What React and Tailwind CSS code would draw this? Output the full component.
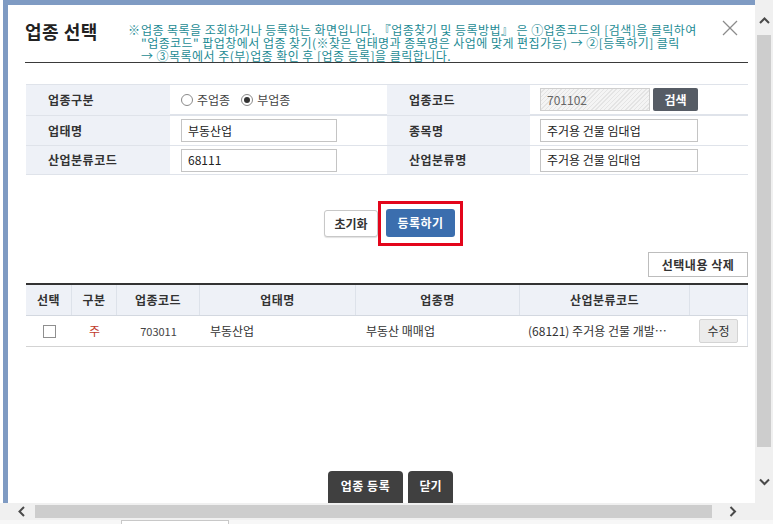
import React from "react";

function Chevron({ dir, className }) {
  const pts = {
    up: "1,6 5.5,1.5 10,6",
    down: "1,1.5 5.5,6 10,1.5",
    left: "6,1 1.5,5.5 6,10",
    right: "1.5,1 6,5.5 1.5,10",
  }[dir];
  const vb = dir === "up" || dir === "down" ? "0 0 11 8" : "0 0 8 11";
  const w = dir === "up" || dir === "down" ? 11 : 8;
  const h = dir === "up" || dir === "down" ? 8 : 11;
  return (
    <svg width={w} height={h} viewBox={vb} className={className}>
      <polyline points={pts} fill="none" stroke="#4a4a4a" strokeWidth="2" />
    </svg>
  );
}

function Radio({ checked }) {
  return (
    <span className="w-[12px] h-[12px] rounded-full border border-[#8a8a8a] bg-white flex items-center justify-center">
      {checked && <span className="w-[6px] h-[6px] rounded-full bg-[#333]" />}
    </span>
  );
}

function Label({ children }) {
  return (
    <div className="bg-[#eef1f7] flex items-center pl-[22px] font-bold text-[12px] text-[#333] tracking-[0.5px]">
      {children}
    </div>
  );
}

function Input({ value, w }) {
  return (
    <div
      className={`h-[23px] border border-[#c4c4c4] bg-white flex items-center pl-[6px] text-[12px] text-[#222] ${w}`}
    >
      {value}
    </div>
  );
}

export default function App() {
  return (
    <div className="w-[773px] h-[524px] overflow-hidden bg-white flex flex-col font-['Noto_Sans_CJK_KR','Liberation_Sans',sans-serif] text-[#333]">
      <div className="flex h-[503px]">
        <div className="w-[3px] bg-white" />
        <div className="w-[752px] border-l-[5px] border-t-[5px] border-[#7f9bc3] flex flex-col overflow-hidden pl-[17px] pr-[7px]">
          {/* header */}
          <div className="h-[60px] flex items-start">
            <div className="w-[103px] pt-[14px] text-[18px] leading-[24px] font-bold text-[#222] whitespace-nowrap tracking-[0.5px]">
              업종 선택
            </div>
            <div className="pt-[18px] text-[12px] leading-[13px] text-[#1d8b94] whitespace-nowrap tracking-[0.45px] flex">
              <span className="w-[13px]">※</span>
              <div className="flex flex-col">
                <span className="h-[13px]">업종 목록을 조회하거나 등록하는 화면입니다. 『업종찾기 및 등록방법』 은 ①업종코드의 [검색]을 클릭하여</span>
                <span className="h-[13px]">"업종코드" 팝업창에서 업종 찾기(※찾은 업태명과 종목명은 사업에 맞게 편집가능) → ②[등록하기] 클릭</span>
                <span className="h-[13px]">→ ③목록에서 주(부)업종 확인 후 [업종 등록]을 클릭합니다.</span>
              </div>
            </div>
            <div className="ml-auto mt-[15px] mr-[10px]">
              <svg width="16" height="16" viewBox="0 0 16 16">
                <line x1="1" y1="1" x2="15" y2="15" stroke="#8c8c8c" strokeWidth="1.2" />
                <line x1="15" y1="1" x2="1" y2="15" stroke="#8c8c8c" strokeWidth="1.2" />
              </svg>
            </div>
          </div>
          <div className="h-[2px] bg-[#3a3a3a]" />

          {/* form table */}
          <div className="mt-[21px] ml-[1px] border-t border-[#dfe3ea] grid grid-cols-[144px_217px_143px_218px] grid-rows-[30px_30px_30px]">
            <Label>업종구분</Label>
            <div className="flex items-center pl-[11px] gap-[4px] text-[12px] text-[#444] border-b border-[#dfe3ea]">
              <Radio />
              <span>주업종</span>
              <span className="w-[3px]" />
              <Radio checked />
              <span>부업종</span>
            </div>
            <Label>업종코드</Label>
            <div className="flex items-center pl-[10px] gap-[3px] border-b border-[#dfe3ea]">
              <div className="w-[110px] h-[23px] border border-[#cfcfcf] flex items-center pl-[6px] text-[12px] text-[#666] bg-[repeating-linear-gradient(135deg,#f4f4f4_0px,#f4f4f4_2px,#e4e4e4_2px,#e4e4e4_3px)]">
                701102
              </div>
              <div className="w-[45px] h-[23px] rounded-[2px] bg-[#565c65] text-white text-[12px] font-bold flex items-center justify-center">
                검색
              </div>
            </div>

            <div className="border-t border-[#dfe3ea] bg-[#eef1f7] flex items-center pl-[22px] font-bold text-[12px] text-[#333] tracking-[0.5px]">업태명</div>
            <div className="border-t border-[#dfe3ea] flex items-center pl-[11px]">
              <Input value="부동산업" w="w-[156px]" />
            </div>
            <div className="border-t border-[#dfe3ea] bg-[#eef1f7] flex items-center pl-[22px] font-bold text-[12px] text-[#333] tracking-[0.5px]">종목명</div>
            <div className="border-t border-[#dfe3ea] flex items-center pl-[10px]">
              <Input value="주거용 건물 임대업" w="w-[158px]" />
            </div>

            <div className="border-y border-[#dfe3ea] bg-[#eef1f7] flex items-center pl-[22px] font-bold text-[12px] text-[#333] tracking-[0.5px]">산업분류코드</div>
            <div className="border-y border-[#dfe3ea] flex items-center pl-[11px]">
              <Input value="68111" w="w-[156px]" />
            </div>
            <div className="border-y border-[#dfe3ea] bg-[#eef1f7] flex items-center pl-[22px] font-bold text-[12px] text-[#333] tracking-[0.5px]">산업분류명</div>
            <div className="border-y border-[#dfe3ea] flex items-center pl-[10px]">
              <Input value="주거용 건물 임대업" w="w-[158px]" />
            </div>
          </div>

          {/* action buttons */}
          <div className="mt-[26px] flex items-center ml-[299px]">
            <div className="w-[54px] h-[27px] border border-[#c8c8c8] rounded-[3px] bg-white shadow-[0_1px_1px_rgba(0,0,0,0.12)] flex items-center justify-center text-[12px] font-bold text-[#333]">
              초기화
            </div>
            <div className="border-[3px] border-[#e3051b] pt-[5px] pb-[6px] px-[5px]">
              <div className="w-[69px] h-[28px] rounded-[3px] bg-[#3b6eae] flex items-center justify-center text-[12px] font-bold text-white tracking-[0.5px]">
                등록하기
              </div>
            </div>
          </div>

          <div className="mt-[6px] flex justify-end">
            <div className="w-[100px] h-[25px] border border-[#bdbdbd] bg-white flex items-center justify-center text-[12px] font-bold text-[#333] tracking-[0.5px]">
              선택내용 삭제
            </div>
          </div>

          {/* list table */}
          <div className="mt-[6px] ml-[1px] border-t-2 border-[#333]">
            <div className="grid grid-cols-[46px_45px_83px_156px_164px_170px_58px] h-[31px] bg-[#eef1f7] border-b border-[#d3d8e0] text-[12px] font-bold text-[#333] tracking-[0.5px]">
              <div className="flex items-center justify-center border-r border-[#dde2ea]">선택</div>
              <div className="flex items-center justify-center border-r border-[#dde2ea]">구분</div>
              <div className="flex items-center justify-center border-r border-[#dde2ea]">업종코드</div>
              <div className="flex items-center justify-center border-r border-[#dde2ea]">업태명</div>
              <div className="flex items-center justify-center border-r border-[#dde2ea]">업종명</div>
              <div className="flex items-center justify-center border-r border-[#dde2ea]">산업분류코드</div>
              <div className="border-r border-[#dde2ea]" />
            </div>
            <div className="grid grid-cols-[46px_45px_83px_156px_164px_170px_58px] h-[31px] border-b border-[#d3d3d3] text-[12px] text-[#333]">
              <div className="flex items-center justify-center">
                <span className="w-[13px] h-[13px] border border-[#8f8f8f] bg-white" />
              </div>
              <div className="flex items-center justify-center text-[#c0392b]">주</div>
              <div className="flex items-center justify-center text-[11px] text-[#444]">703011</div>
              <div className="flex items-center pl-[10px]">부동산업</div>
              <div className="flex items-center pl-[10px]">부동산 매매업</div>
              <div className="flex items-center pl-[8px] whitespace-nowrap">(68121) 주거용 건물 개발…</div>
              <div className="flex items-center pl-[9px] border-r border-[#dde2ea]">
                <div className="w-[39px] h-[24px] bg-[#ececec] border border-[#d4d4d4] rounded-[2px] flex items-center justify-center">
                  수정
                </div>
              </div>
            </div>
          </div>

          {/* bottom buttons */}
          <div className="mt-[124px] ml-[303px] flex gap-[5px]">
            <div className="w-[75px] h-[32px] rounded-t-[4px] bg-[#404040] flex justify-center pt-[6px] text-[12px] font-bold text-white tracking-[0.5px]">
              업종 등록
            </div>
            <div className="w-[45px] h-[32px] rounded-t-[4px] bg-[#404040] flex justify-center pt-[6px] text-[12px] font-bold text-white">
              닫기
            </div>
          </div>
        </div>

        {/* vertical scrollbar */}
        <div className="w-[18px] bg-[#f0f0f0] flex flex-col items-center">
          <div className="h-[35px] flex items-center justify-center pt-[6px]">
            <Chevron dir="up" />
          </div>
          <div className="w-[14px] h-[412px] bg-[#cdcdcd]" />
          <div className="flex-1 flex items-center justify-center pt-[14px]">
            <Chevron dir="down" />
          </div>
        </div>
      </div>

      {/* horizontal scrollbar */}
      <div className="h-[17px] bg-[#f0f0f0] flex items-center">
        <div className="w-[35px] flex justify-center pl-[8px]">
          <Chevron dir="left" />
        </div>
        <div className="w-[677px] h-[13px] bg-[#cdcdcd]" />
        <div className="flex-1 flex justify-center pr-[20px]">
          <Chevron dir="right" />
        </div>
      </div>
      <div className="flex-1 bg-[#f7f7f7] flex">
        <div className="ml-[121px] w-[108px] border-t border-x border-[#c8c8c8] bg-white" />
      </div>
    </div>
  );
}
